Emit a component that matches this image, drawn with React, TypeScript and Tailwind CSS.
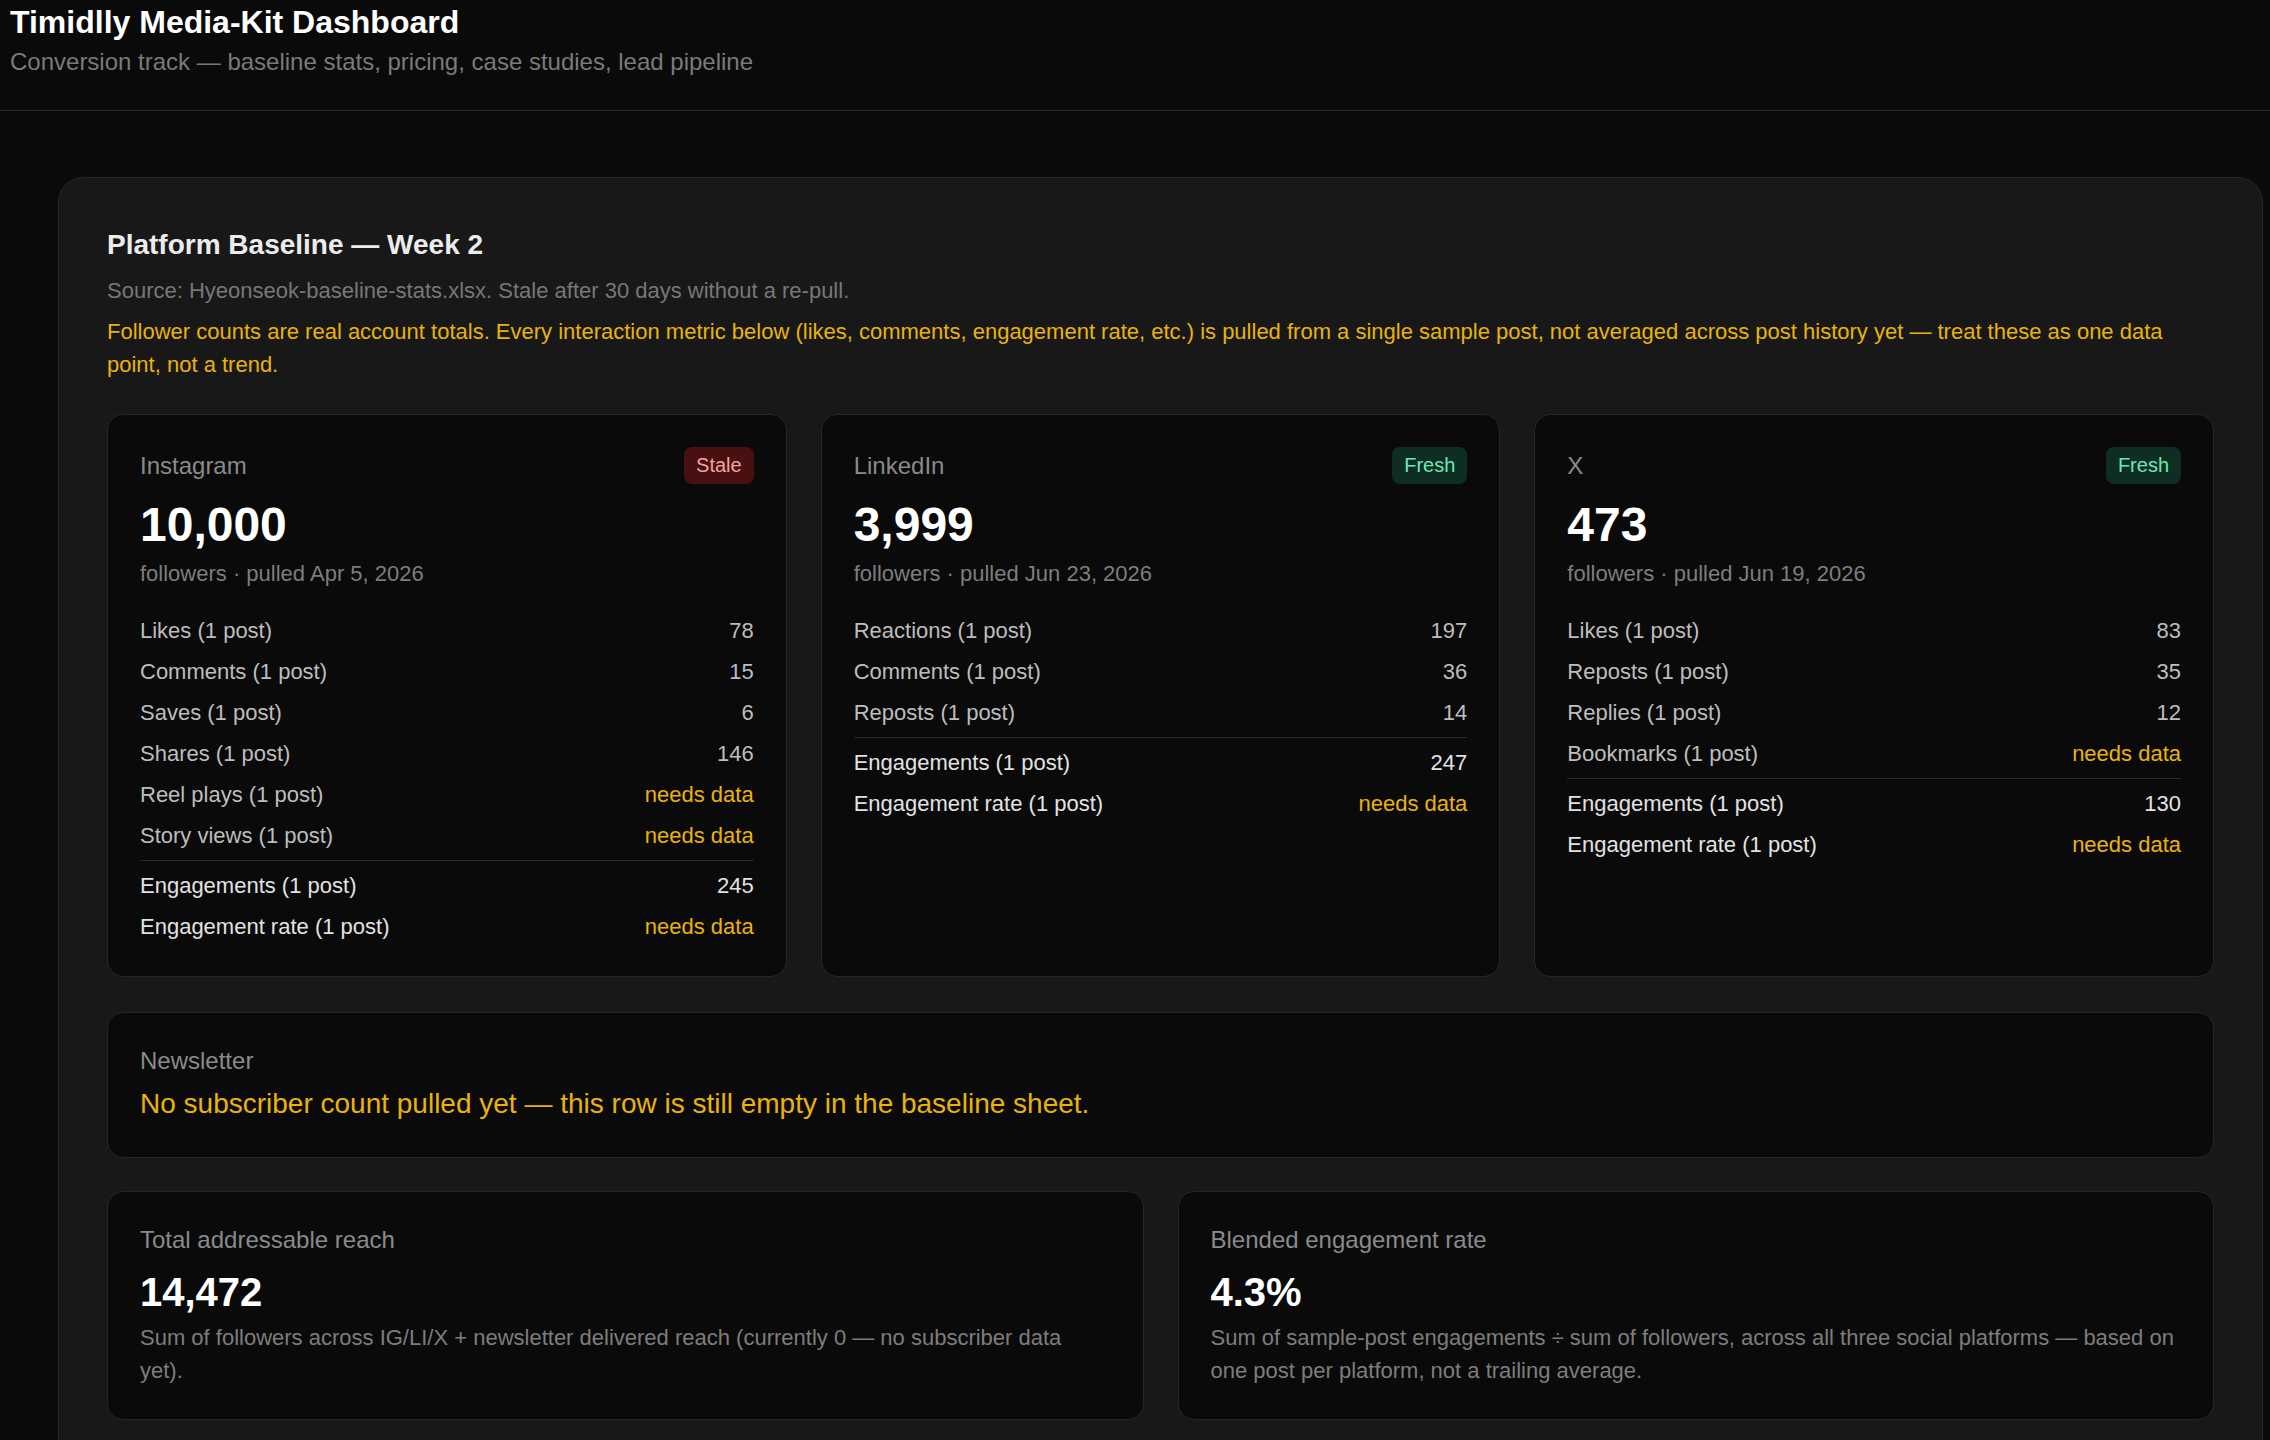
import React from 'react'

type Row = { label: string; value: string | null }

interface Platform {
  name: string
  status: 'Stale' | 'Fresh'
  followers: string
  pulled: string
  rows: Row[]
  totals: Row[]
}

const platforms: Platform[] = [
  {
    name: 'Instagram',
    status: 'Stale',
    followers: '10,000',
    pulled: 'Apr 5, 2026',
    rows: [
      { label: 'Likes (1 post)', value: '78' },
      { label: 'Comments (1 post)', value: '15' },
      { label: 'Saves (1 post)', value: '6' },
      { label: 'Shares (1 post)', value: '146' },
      { label: 'Reel plays (1 post)', value: null },
      { label: 'Story views (1 post)', value: null },
    ],
    totals: [
      { label: 'Engagements (1 post)', value: '245' },
      { label: 'Engagement rate (1 post)', value: null },
    ],
  },
  {
    name: 'LinkedIn',
    status: 'Fresh',
    followers: '3,999',
    pulled: 'Jun 23, 2026',
    rows: [
      { label: 'Reactions (1 post)', value: '197' },
      { label: 'Comments (1 post)', value: '36' },
      { label: 'Reposts (1 post)', value: '14' },
    ],
    totals: [
      { label: 'Engagements (1 post)', value: '247' },
      { label: 'Engagement rate (1 post)', value: null },
    ],
  },
  {
    name: 'X',
    status: 'Fresh',
    followers: '473',
    pulled: 'Jun 19, 2026',
    rows: [
      { label: 'Likes (1 post)', value: '83' },
      { label: 'Reposts (1 post)', value: '35' },
      { label: 'Replies (1 post)', value: '12' },
      { label: 'Bookmarks (1 post)', value: null },
    ],
    totals: [
      { label: 'Engagements (1 post)', value: '130' },
      { label: 'Engagement rate (1 post)', value: null },
    ],
  },
]

function StatRow({ row, strong }: { row: Row; strong?: boolean }) {
  const tone = strong ? 'text-[#e2e2e2]' : 'text-[#bdbdbd]'
  return (
    <div className="flex items-center justify-between text-[22px] leading-[33px]">
      <span className={tone}>{row.label}</span>
      {row.value === null ? (
        <span className="text-[#eab308]">needs data</span>
      ) : (
        <span className={tone}>{row.value}</span>
      )}
    </div>
  )
}

function PlatformCard({ p }: { p: Platform }) {
  return (
    <div className="rounded-[16px] border border-[#262626] bg-[#0a0a0a] px-[32px] pt-[32px] pb-[33px]">
      <div className="flex items-center justify-between">
        <span className="text-[24px] leading-[32px] text-[#8a8a8a]">{p.name}</span>
        {p.status === 'Stale' ? (
          <span className="rounded-[8px] bg-[#481010] px-[12px] text-[20px] leading-[37px] text-[#f4a3a3]">Stale</span>
        ) : (
          <span className="rounded-[8px] bg-[#0e2e24] px-[12px] text-[20px] leading-[37px] text-[#6ee7b7]">Fresh</span>
        )}
      </div>
      <div className="mt-[12px] text-[48px] font-bold leading-[1.2] text-white">{p.followers}</div>
      <div className="mt-[3px] text-[22px] leading-[33px] text-[#7d7d7d]">followers · pulled {p.pulled}</div>

      <div className="mt-[24px] flex flex-col gap-[8px]">
        {p.rows.map((r) => (
          <StatRow key={r.label} row={r} />
        ))}
      </div>
      {/* totals sit under a thin rule */}
      <div className="mt-[8px] flex flex-col gap-[8px] border-t border-[#2a2a2a] pt-[8px]">
        {p.totals.map((r) => (
          <StatRow key={r.label} row={r} strong />
        ))}
      </div>
    </div>
  )
}

function SummaryCard({ label, value, note, narrow }: { label: string; value: string; note: string; narrow?: boolean }) {
  return (
    <div className="rounded-[16px] border border-[#262626] bg-[#0a0a0a] px-[32px] pt-[32px] pb-[32px]">
      <div className="text-[24px] leading-[32px] text-[#8a8a8a]">{label}</div>
      <div className="mt-[12px] text-[40px] font-bold leading-[48px] text-white">{value}</div>
      <p className={`mt-[5px] text-[22px] leading-[33px] text-[#7d7d7d] ${narrow ? 'pr-[14px]' : ''}`}>{note}</p>
    </div>
  )
}

export default function App() {
  return (
    <div className="min-h-screen bg-[#0a0a0a] font-['Liberation_Sans',Arial,sans-serif]">
      {/* Page header */}
      <header className="border-b border-[#2a2a2a] px-[10px] pt-[2px] pb-[30px]">
        <h1 className="text-[32px] font-bold leading-[40px] text-white">Timidlly Media-Kit Dashboard</h1>
        <p className="mt-[2px] text-[24px] leading-[36px] text-[#7a7a7a]">
          Conversion track — baseline stats, pricing, case studies, lead pipeline
        </p>
      </header>

      <main className="pt-[66px] pl-[58px] pr-[7px]">
        <section className="rounded-[25px] border border-[#262626] bg-[#181818] p-[48px]">
          <h2 className="text-[28px] font-bold leading-[38px] text-[#ececec]">Platform Baseline — Week 2</h2>
          <p className="mt-[10px] text-[22px] leading-[33px] text-[#777777]">
            Source: Hyeonseok-baseline-stats.xlsx. Stale after 30 days without a re-pull.
          </p>
          <p className="mt-[8px] text-[22px] leading-[33px] text-[#eab308]">
            Follower counts are real account totals. Every interaction metric below (likes, comments, engagement rate, etc.) is
            pulled from a single sample post, not averaged across post history yet — treat these as one data point, not a trend.
          </p>

          <div className="mt-[33px] grid grid-cols-3 gap-[34px]">
            {platforms.map((p) => (
              <PlatformCard key={p.name} p={p} />
            ))}
          </div>

          <div className="mt-[35px] rounded-[16px] border border-[#262626] bg-[#0a0a0a] px-[32px] py-[32px]">
            <div className="text-[24px] leading-[32px] text-[#8a8a8a]">Newsletter</div>
            <div className="mt-[6px] text-[28px] leading-[42px] text-[#eab308]">
              No subscriber count pulled yet — this row is still empty in the baseline sheet.
            </div>
          </div>

          <div className="mt-[33px] grid grid-cols-2 gap-[34px]">
            <SummaryCard
              label="Total addressable reach"
              value="14,472"
              narrow
              note="Sum of followers across IG/LI/X + newsletter delivered reach (currently 0 — no subscriber data yet)."
            />
            <SummaryCard
              label="Blended engagement rate"
              value="4.3%"
              note="Sum of sample-post engagements ÷ sum of followers, across all three social platforms — based on one post per platform, not a trailing average."
            />
          </div>
        </section>
      </main>
    </div>
  )
}
